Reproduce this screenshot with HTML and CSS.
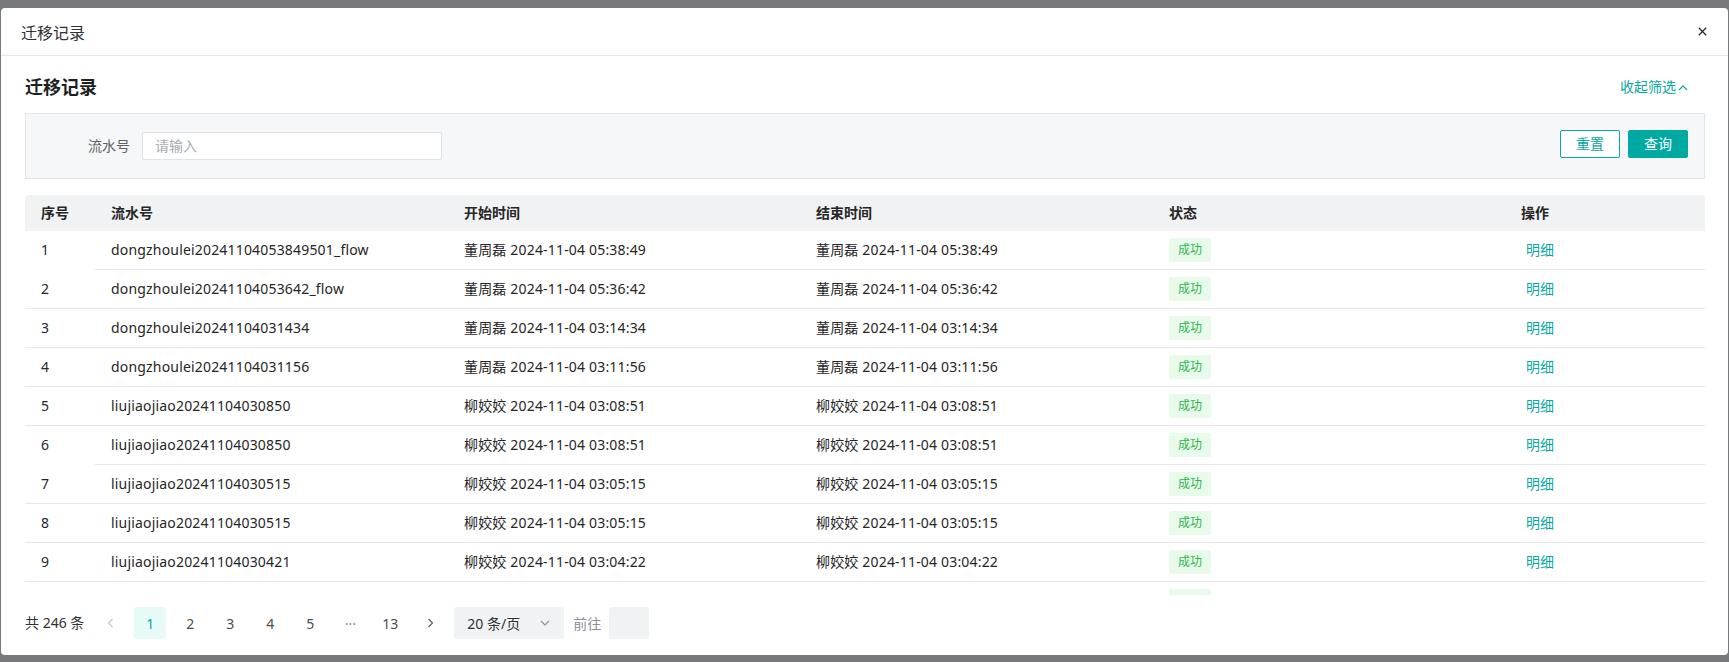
FILE: index.html
```html
<!DOCTYPE html>
<html lang="zh-CN">
<head>
<meta charset="utf-8">
<title>迁移记录</title>
<link rel="stylesheet" href="styles.css">
</head>
<body>
<div class="modal">
  <div class="modal-header">
    <span class="modal-title">迁移记录</span>
    <span class="modal-close"><svg width="9" height="9" viewBox="0 0 9 9"><path d="M0.8 0.8 L8.2 8.2 M8.2 0.8 L0.8 8.2" stroke="#2b2b2b" stroke-width="1.3" fill="none"/></svg></span>
  </div>
  <div class="modal-body">
    <div class="title-row">
      <h2 class="page-title">迁移记录</h2>
      <span class="collapse-link">收起筛选<svg class="up-icon" width="10" height="7" viewBox="0 0 10 7"><path d="M1 6 L5 1.8 L9 6" stroke="currentColor" stroke-width="1.2" fill="none"/></svg></span>
    </div>
    <div class="filter">
      <div class="filter-item">
        <label class="filter-label">流水号</label>
        <div class="filter-input">请输入</div>
      </div>
      <div class="filter-actions">
        <button class="btn btn-plain">重置</button>
        <button class="btn btn-primary">查询</button>
      </div>
    </div>
    <div class="table">
      <table class="thead">
        <colgroup><col class="c1"><col class="c2"><col class="c3"><col class="c4"><col class="c5"><col class="c6"></colgroup>
        <tr><th>序号</th><th>流水号</th><th>开始时间</th><th>结束时间</th><th>状态</th><th>操作</th></tr>
      </table>
      <div class="tbody-wrap">
        <table class="tbody">
          <colgroup><col class="c1"><col class="c2"><col class="c3"><col class="c4"><col class="c5"><col class="c6"></colgroup>
          <tr class="split"><td>1</td><td>dongzhoulei20241104053849501_flow</td><td>董周磊 2024-11-04 05:38:49</td><td>董周磊 2024-11-04 05:38:49</td><td><span class="tag">成功</span></td><td><span class="link">明细</span></td></tr>
          <tr><td>2</td><td>dongzhoulei20241104053642_flow</td><td>董周磊 2024-11-04 05:36:42</td><td>董周磊 2024-11-04 05:36:42</td><td><span class="tag">成功</span></td><td><span class="link">明细</span></td></tr>
          <tr><td>3</td><td>dongzhoulei20241104031434</td><td>董周磊 2024-11-04 03:14:34</td><td>董周磊 2024-11-04 03:14:34</td><td><span class="tag">成功</span></td><td><span class="link">明细</span></td></tr>
          <tr><td>4</td><td>dongzhoulei20241104031156</td><td>董周磊 2024-11-04 03:11:56</td><td>董周磊 2024-11-04 03:11:56</td><td><span class="tag">成功</span></td><td><span class="link">明细</span></td></tr>
          <tr><td>5</td><td>liujiaojiao20241104030850</td><td>柳姣姣 2024-11-04 03:08:51</td><td>柳姣姣 2024-11-04 03:08:51</td><td><span class="tag">成功</span></td><td><span class="link">明细</span></td></tr>
          <tr class="split"><td>6</td><td>liujiaojiao20241104030850</td><td>柳姣姣 2024-11-04 03:08:51</td><td>柳姣姣 2024-11-04 03:08:51</td><td><span class="tag">成功</span></td><td><span class="link">明细</span></td></tr>
          <tr><td>7</td><td>liujiaojiao20241104030515</td><td>柳姣姣 2024-11-04 03:05:15</td><td>柳姣姣 2024-11-04 03:05:15</td><td><span class="tag">成功</span></td><td><span class="link">明细</span></td></tr>
          <tr><td>8</td><td>liujiaojiao20241104030515</td><td>柳姣姣 2024-11-04 03:05:15</td><td>柳姣姣 2024-11-04 03:05:15</td><td><span class="tag">成功</span></td><td><span class="link">明细</span></td></tr>
          <tr><td>9</td><td>liujiaojiao20241104030421</td><td>柳姣姣 2024-11-04 03:04:22</td><td>柳姣姣 2024-11-04 03:04:22</td><td><span class="tag">成功</span></td><td><span class="link">明细</span></td></tr>
          <tr class="peek"><td></td><td></td><td></td><td></td><td><span class="tag tag-empty"></span></td><td></td></tr>
        </table>
      </div>
    </div>
    <div class="pager">
      <span class="pager-total">共 246 条</span>
      <span class="pager-btn pager-prev"><svg width="7" height="10" viewBox="0 0 7 10"><path d="M5.5 1 L1.5 5 L5.5 9" stroke="currentColor" stroke-width="1.1" fill="none"/></svg></span>
      <span class="pager-btn pager-num active">1</span>
      <span class="pager-btn pager-num">2</span>
      <span class="pager-btn pager-num">3</span>
      <span class="pager-btn pager-num">4</span>
      <span class="pager-btn pager-num">5</span>
      <span class="pager-btn pager-more">···</span>
      <span class="pager-btn pager-num">13</span>
      <span class="pager-btn pager-next"><svg width="7" height="10" viewBox="0 0 7 10"><path d="M1.5 1 L5.5 5 L1.5 9" stroke="currentColor" stroke-width="1.1" fill="none"/></svg></span>
      <span class="pager-size">20 条/页<svg class="down-icon" width="10" height="6" viewBox="0 0 10 6"><path d="M1 1 L5 5 L9 1" stroke="currentColor" stroke-width="1.1" fill="none"/></svg></span>
      <span class="pager-goto">前往</span>
      <span class="pager-jump"></span>
    </div>
  </div>
</div>
</body>
</html>
```
FILE: styles.css
```css
* { box-sizing: border-box; }
html, body { margin: 0; padding: 0; }
body {
  background: #77797c;
  font-family: "Noto Sans", "Noto Sans CJK SC", sans-serif;
  font-size: 14px;
  color: #303133;
  height: 662px;
  overflow: hidden;
}
.modal {
  margin: 8px 1px 0 1px;
  width: 1727px;
  height: 647px;
  background: #fff;
  border-radius: 4px;
  display: flex;
  flex-direction: column;
}
.modal-header {
  height: 48px;
  border-bottom: 1px solid #e4e6ea;
  display: flex;
  align-items: center;
  justify-content: space-between;
  padding: 2px 20px 0 20px;
}
.modal-title {
  font-size: 16px;
  line-height: 22px;
  color: #303133;
}
.modal-close {
  display: flex;
  width: 9px;
  height: 9px;
  margin-right: 1px;
  margin-top: -2px;
}
.modal-body {
  padding: 0 23px 0 24px;
  display: flex;
  flex-direction: column;
}
.title-row {
  display: flex;
  align-items: center;
  justify-content: space-between;
  padding-top: 19px;
  height: 43px;
  margin-bottom: 14px;
}
.page-title {
  margin: 0;
  font-size: 18px;
  line-height: 24px;
  font-weight: 700;
  color: #1f1f1f;
}
.collapse-link {
  display: flex;
  align-items: center;
  color: #0aa8a0;
  font-size: 14px;
  line-height: 22px;
  margin-right: 17px;
}
.up-icon { margin-left: 2px; }
.filter {
  height: 66px;
  background: #f6f7f9;
  border: 1px solid #e3e5e9;
  display: flex;
  justify-content: space-between;
  align-items: flex-start;
  padding: 0 16px 0 24px;
}
.filter-item {
  display: flex;
  align-items: center;
  margin-top: 18px;
}
.filter-label {
  width: 92px;
  text-align: right;
  padding-right: 12px;
  color: #606266;
  line-height: 28px;
}
.filter-input {
  width: 300px;
  height: 28px;
  background: #fff;
  border: 1px solid #dfe2e7;
  border-radius: 2px;
  padding-left: 12px;
  color: #a8abb2;
  line-height: 26px;
}
.filter-actions {
  display: flex;
  gap: 8px;
  margin-top: 16px;
}
.btn {
  width: 60px;
  height: 28px;
  font-family: inherit;
  font-size: 14px;
  border-radius: 2px;
  padding: 0;
  line-height: 26px;
}
.btn-plain {
  background: #fff;
  border: 1px solid #0aa8a0;
  color: #0aa8a0;
}
.btn-primary {
  background: #00a9a2;
  border: 1px solid #00a9a2;
  color: #fff;
}
.table {
  margin-top: 16px;
}
table {
  width: 1680px;
  border-collapse: separate;
  border-spacing: 0;
  table-layout: fixed;
}
col.c1 { width: 70px; }
col.c2 { width: 353px; }
col.c3 { width: 352px; }
col.c4 { width: 353px; }
col.c5 { width: 352px; }
col.c6 { width: 200px; }
.thead {
  background: #f1f2f4;
  border-radius: 4px 4px 0 0;
  overflow: hidden;
}
.thead th {
  height: 36px;
  text-align: left;
  padding: 0 0 0 16px;
  font-weight: 700;
  color: #262626;
  line-height: 20px;
}
.tbody-wrap {
  height: 364px;
  overflow: hidden;
}
.tbody td {
  height: 39px;
  padding: 0 0 0 16px;
  border-bottom: 1px solid #e6e8eb;
  color: #262626;
  line-height: 20px;
  white-space: nowrap;
  letter-spacing: 0.18px;
}
.tbody tr.split td:first-child {
  border-bottom-color: transparent;
}
.tag {
  display: inline-block;
  height: 24px;
  line-height: 24px;
  padding: 0 9px;
  font-size: 12px;
  letter-spacing: 0;
  background: #e8fbea;
  color: #2fb54d;
  border-radius: 2px;
  vertical-align: middle;
}
.tag-empty {
  width: 42px;
}
.link {
  color: #0aa8a0;
  padding-left: 5px;
  letter-spacing: 0;
}
.pager {
  display: flex;
  align-items: center;
  margin-top: 12px;
  height: 32px;
  color: #606266;
}
.pager-total {
  color: #303133;
  margin-right: 10px;
  line-height: 32px;
}
.pager-btn {
  width: 32px;
  height: 32px;
  display: flex;
  align-items: center;
  justify-content: center;
  margin-right: 8px;
  color: #4a4d52;
  border-radius: 2px;
}
.pager-prev { color: #c4c7cc; }
.pager-next { color: #55585d; }
.pager-num.active {
  background: #e6fbf8;
  color: #0aa8a0;
}
.pager-more { color: #8a8d92; }
.pager-size {
  width: 110px;
  height: 32px;
  background: #f1f2f4;
  border-radius: 2px;
  display: flex;
  align-items: center;
  justify-content: space-between;
  padding: 0 14px 0 13px;
  color: #303133;
}
.down-icon { color: #8c8f94; }
.pager-goto {
  margin-left: 9px;
  color: #8c8f94;
}
.pager-jump {
  width: 40px;
  height: 32px;
  background: #f1f2f4;
  margin-left: 8px;
  border-radius: 2px;
}
```
